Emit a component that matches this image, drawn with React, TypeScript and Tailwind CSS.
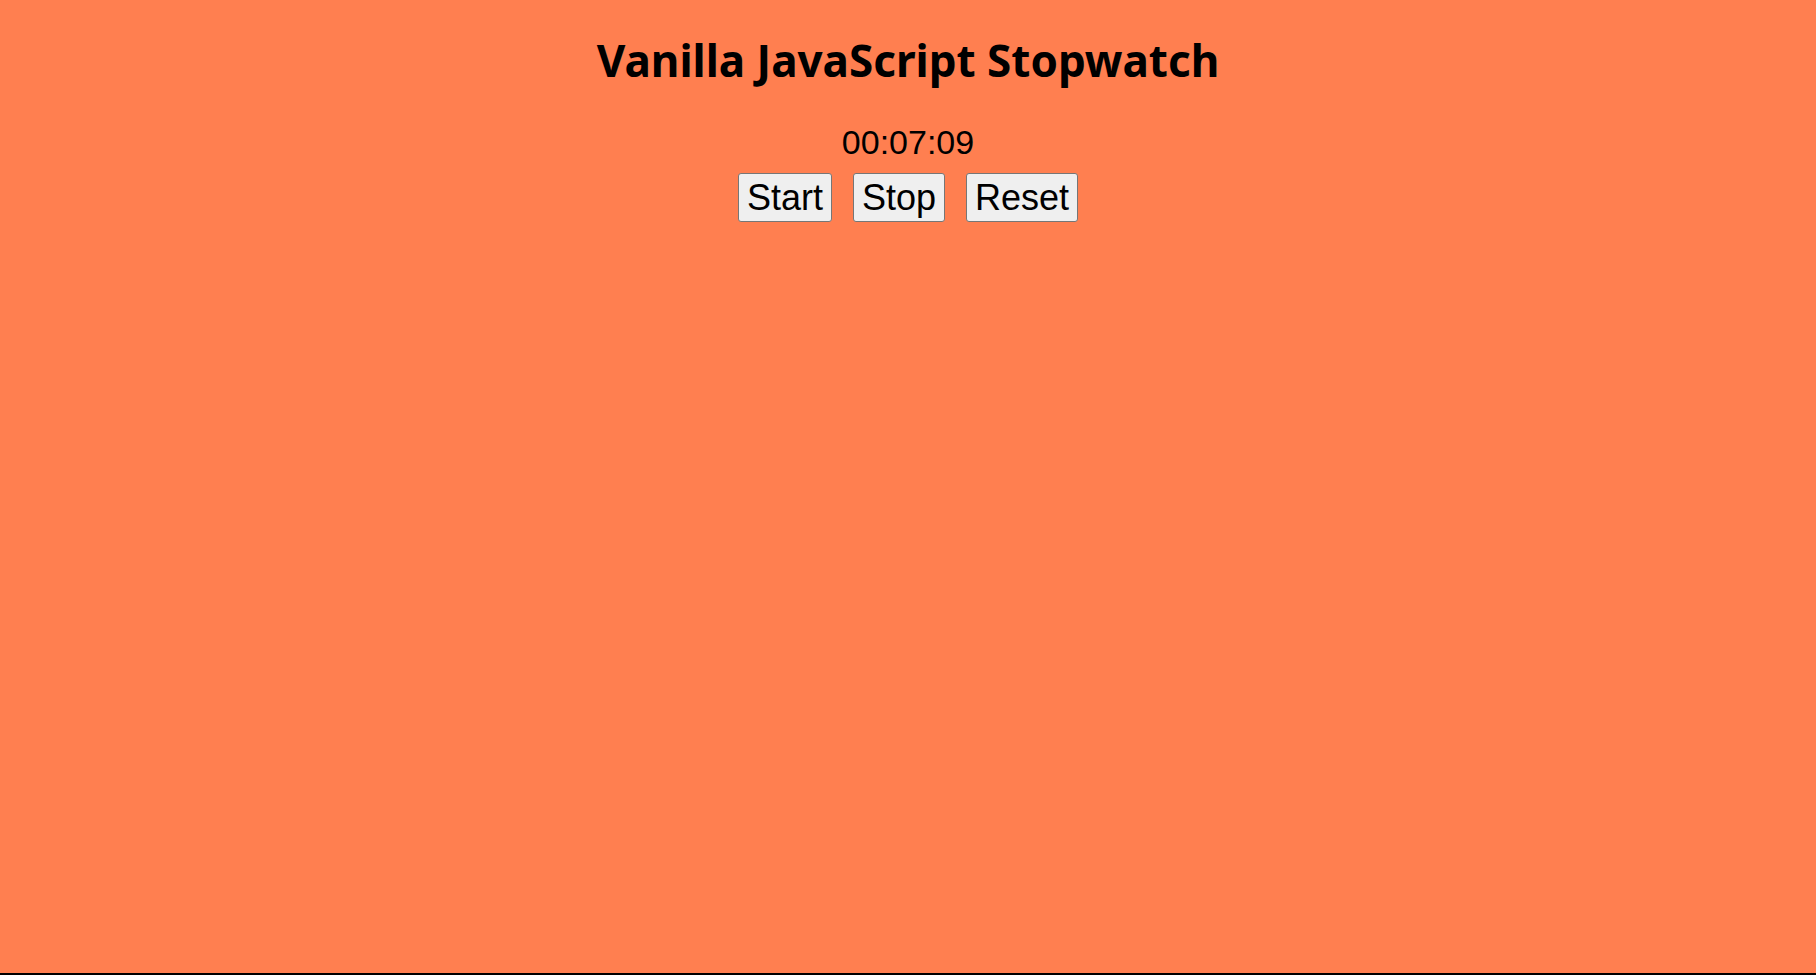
export default function App() {
  return (
    <div className="h-screen bg-[#ff7f50] border-b-2 border-black flex flex-col items-center text-black">
      <h1 className="mt-[32px] text-[44px] leading-[56px] font-bold font-['Comic_Sans_MS','Noto_Sans',sans-serif]">
        Vanilla JavaScript Stopwatch
      </h1>
      <div className="mt-[35px] text-[34px] leading-[39px] font-['Liberation_Sans',Arial,sans-serif]">
        00:07:09
      </div>
      <div className="mt-[11px] flex gap-[21px] font-['Liberation_Sans',Arial,sans-serif]">
        <button className="h-[49px] px-[8px] text-[36px] leading-[41px] bg-[#efefef] border border-[#767676] rounded-[3px]">Start</button>
        <button className="h-[49px] px-[8px] text-[36px] leading-[41px] bg-[#efefef] border border-[#767676] rounded-[3px]">Stop</button>
        <button className="h-[49px] px-[8px] text-[36px] leading-[41px] bg-[#efefef] border border-[#767676] rounded-[3px]">Reset</button>
      </div>
    </div>
  );
}
